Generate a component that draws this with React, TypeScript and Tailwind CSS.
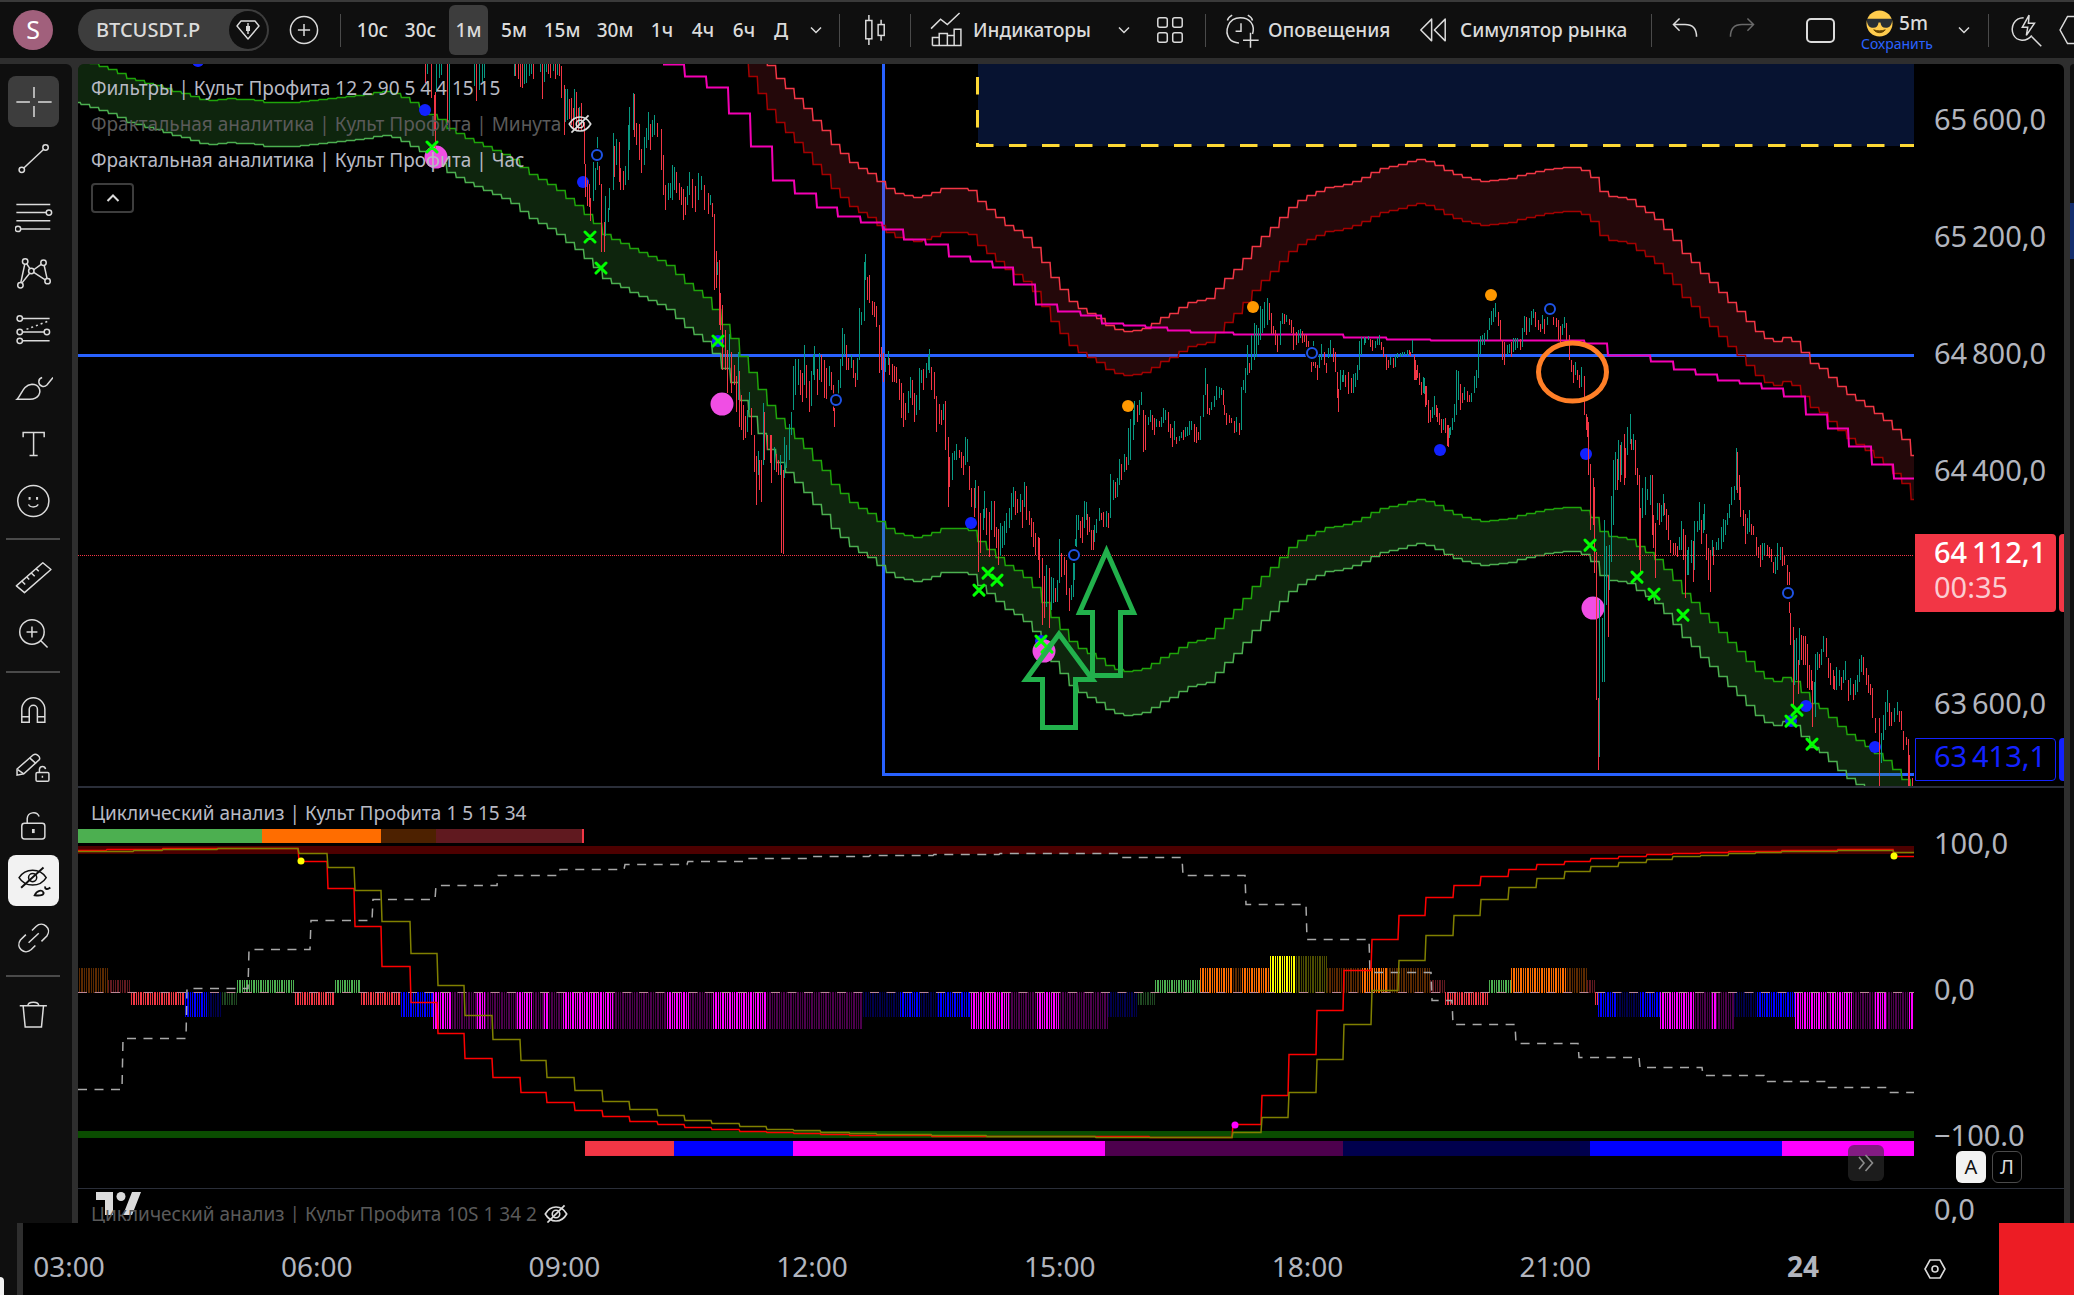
import type { ReactNode } from "react";
import { clsx } from "clsx";

type Point = [number, number];

const parse = (data: string) =>
  data
    .trim()
    .split(/\s*,\s*/)
    .map((item) => item.split(/\s+/).map(Number));

/* ---------- price pane data ---------- */

// upper edge of the green channel, the other three edges are shifted copies
const CHANNEL = parse(`
78 58, 99 64, 116 70, 134 79, 152 83, 172 89, 192 95, 209 101, 229 98, 249 99, 272 102, 298 102, 318 100, 338 97,
365 95, 385 90, 400 94, 414 101, 423 106, 432 113, 441 118, 452 128, 461 133, 479 142, 496 149, 514 158, 532 173,
550 182, 561 189, 570 198, 579 204, 589 214, 598 223, 607 234, 616 239, 629 245, 643 252, 657 257, 671 265, 680 273,
689 283, 698 289, 707 296, 716 307, 725 322, 735 337, 744 355, 753 371, 763 389, 771 404, 780 417, 790 428, 799 438,
808 447, 817 459, 826 469, 835 483, 845 493, 854 502, 863 508, 872 513, 881 520, 891 528, 900 533, 918 537, 932 534,
946 528, 968 528, 973 530, 981 540, 991 548, 1001 557, 1010 565, 1020 570, 1028 577, 1037 586, 1046 601, 1055 616,
1064 628, 1073 640, 1082 647, 1093 653, 1102 658, 1111 665, 1120 669, 1129 671, 1146 669, 1155 664, 1165 657,
1174 653, 1184 647, 1193 642, 1211 638, 1220 628, 1229 618, 1239 609, 1247 599, 1257 586, 1266 576, 1276 566,
1285 556, 1294 547, 1304 539, 1313 534, 1330 527, 1350 524, 1368 516, 1382 509, 1400 505, 1413 501, 1422 499,
1432 501, 1443 507, 1452 511, 1469 518, 1486 521, 1512 518, 1529 513, 1550 509, 1572 506, 1585 509, 1596 517,
1604 531, 1614 536, 1634 539, 1642 547, 1651 552, 1660 559, 1669 569, 1678 580, 1687 593, 1697 603, 1705 613,
1715 623, 1725 634, 1734 643, 1743 652, 1752 662, 1761 672, 1770 678, 1778 681, 1788 677, 1798 682, 1806 692,
1816 704, 1826 709, 1834 718, 1843 726, 1852 734, 1862 741, 1870 746, 1881 754, 1890 762, 1899 771, 1908 780, 1914 795
`);

const TREND = parse(`
663 64, 685 76, 707 87, 729 113, 751 146, 773 180, 795 193, 817 207, 838 216, 861 222, 883 229, 904 239, 926 244,
949 256, 971 261, 993 267, 1014 284, 1036 304, 1058 311, 1081 315, 1102 323, 1124 325, 1146 327, 1168 330, 1191 332,
1234 334, 1321 334, 1344 337, 1387 339, 1431 340, 1585 343, 1608 355, 1651 361, 1674 369, 1696 374, 1718 380,
1740 383, 1762 388, 1784 396, 1806 414, 1828 428, 1849 446, 1872 464, 1894 478
`);

// bars as "x high low"; x is local to the group
const BAR_GROUPS = [
  {
    from: 400,
    scale: 2.8,
    bars: `70 64 83, 76 64 74, 88 64 98, 94 95 131, 97 92 148, 102 64 92, 108 64 78, 115 64 75, 132 64 125, 138 64 120,
207 64 86, 212 64 101, 222 64 90, 230 64 82, 236 64 78, 318 64 76, 323 64 76, 329 64 79, 335 64 87, 341 64 88, 347 64 84,
354 64 83, 360 64 76, 366 64 74, 373 64 79, 391 64 72, 397 64 99, 403 64 82, 409 64 72, 415 64 74, 421 64 78, 427 64 71, 433 64 79,
439 64 75, 445 64 76, 452 66 98, 458 85 135, 462 89 122, 468 89 120, 473 99 119, 478 98 125, 483 108 128, 488 89 120,
492 92 130, 497 108 130, 502 107 125, 508 103 130, 514 122 164, 519 164 197, 523 180 206, 528 184 207, 533 198 221,
539 162 201, 545 168 190, 551 137 170, 557 166 185, 564 184 252, 570 222 252, 575 196 236, 581 208 222, 586 188 210,
595 133 190, 600 146 177, 606 139 165, 612 142 182, 617 168 190, 623 171 190, 631 166 185, 637 125 180, 642 107 150,
651 93 130, 656 94 137, 662 123 145, 668 124 160, 676 149 173, 682 137 165, 688 128 148, 693 112 140, 700 124 150,
706 120 137, 712 115 135, 720 123 137, 730 129 170, 737 155 195, 743 185 210, 749 183 200, 755 183 198, 761 165 200,
768 167 190, 774 172 193, 780 183 200, 786 187 205, 792 189 220, 798 197 215, 804 186 205, 810 172 195, 817 179 208,
827 186 212, 835 173 200, 842 176 190, 852 185 210, 861 193 214, 867 195 205, 873 203 217, 878 214 290, 884 251 288,
887 262 275, 892 260 325, 897 293 330, 902 305 370, 910 330 370, 915 350 393, 922 334 370, 928 352 393, 934 365 385,
940 376 412, 946 352 400, 948 371 427, 954 395 430, 960 405 440, 966 416 438, 971 410 432, 976 392 410, 984 408 435,
990 435 472, 996 456 505, 1001 451 475, 1006 460 490, 1010 460 502, 1015 403 465, 1020 412 460, 1028 435 450,
1035 435 463, 1040 435 483, 1046 447 470, 1052 454 472, 1058 460 475, 1063 455 475, 1068 465 553, 1071 470 554,
1076 437 478, 1082 445 468, 1088 424 460, 1095 412 435, 1101 366 410, 1107 359 395, 1113 359 385, 1119 370 395,
1126 373 402, 1132 345 385, 1138 365 398, 1144 381 412, 1150 371 406, 1155 355 375, 1160 346 380, 1168 369 395,
1174 353 380, 1180 355 382, 1186 360 398, 1192 368 399, 1200 366 386, 1206 372 390, 1211 385 411, 1216 408 427,
1225 380 395, 1231 359 388, 1237 328 366, 1242 334 355, 1248 345 370, 1254 358 370, 1262 355 368, 1268 360 378,
1273 373 387, 1280 358 380, 1286 308 360, 1292 312 325, 1298 262 321, 1303 254 280, 1308 277 300, 1314 275 303,
1322 301 315, 1328 302 317, 1334 306 327, 1340 325 373, 1348 347 370, 1353 353 382, 1359 358 372, 1365 351 365,
1370 358 375, 1378 364 382, 1384 366 382, 1390 367 383, 1396 379 400`,
  },
  {
    from: 900,
    scale: 2.8,
    bars: `2 383 418, 9 393 427, 15 403 420, 21 391 413, 27 377 398, 33 380 405, 40 393 422, 46 395 415, 52 368 410,
58 370 383, 65 369 390, 72 363 378, 77 355 370, 82 349 373, 88 367 390, 95 372 399, 102 396 432, 108 404 424,
114 410 425, 119 404 420, 127 401 450, 133 437 507, 138 457 487, 145 453 480, 152 451 460, 158 444 460, 164 450 458,
170 452 468, 175 456 475, 181 437 465, 187 439 462, 194 466 490, 200 488 507, 206 488 517, 211 480 508, 218 486 572,
225 513 553, 231 509 530, 236 491 518, 242 508 535, 248 512 557, 256 501 530, 262 501 537, 268 527 548, 273 529 565,
279 523 556, 285 526 548, 291 521 545, 298 513 533, 304 508 528, 310 493 520, 317 487 507, 322 491 515, 328 499 513,
335 494 512, 342 500 528, 348 482 507, 354 486 520, 360 511 525, 366 518 537, 373 522 547, 379 533 555, 385 537 560,
390 538 578, 397 558 625, 403 576 618, 410 565 607, 416 568 628, 422 577 610, 429 578 603, 435 588 602, 440 580 602,
446 539 583, 452 553 577, 459 557 575, 466 560 595, 472 588 611, 478 585 600, 483 563 597, 488 563 580, 489 539 546,
492 515 547, 498 515 530, 504 521 538, 510 517 543, 514 501 528, 520 502 520, 524 514 535, 529 517 532, 535 530 550,
540 530 550, 544 525 542, 550 519 533, 556 508 521, 563 513 520, 569 512 527, 576 511 527, 583 513 528, 589 474 518,
595 480 500, 601 482 498, 608 478 497, 614 459 485, 620 464 480, 626 454 472, 632 457 470, 638 428 465, 644 419 460,
651 410 440, 656 401 425, 663 405 422, 669 400 415, 675 392 405, 681 410 452, 687 415 450, 693 417 425, 699 410 422,
705 415 430, 712 418 435, 718 419 427, 724 421 427, 730 417 427, 737 408 423, 743 410 420, 749 412 432, 755 424 438,
761 428 447, 768 421 440, 774 437 444, 780 436 441, 787 432 438, 793 430 440, 798 427 437, 804 427 436, 810 421 435,
816 421 430, 822 424 442, 828 427 443, 834 432 440, 840 416 440, 848 395 417, 853 368 395, 860 384 414, 866 408 415,
872 402 410, 879 396 407, 886 386 400, 892 387 398, 898 388 395, 903 390 405, 908 405 415, 914 413 425, 921 415 423,
928 418 423, 934 421 433, 940 417 432, 948 423 435, 954 387 430, 960 380 390, 965 368 393, 971 345 375, 977 363 373,
984 335 370, 990 323 360, 996 325 357, 1002 328 345, 1008 306 340, 1014 309 333, 1020 302 328, 1027 298 325,
1032 303 320, 1038 313 334, 1044 326 334, 1050 330 345, 1056 335 352, 1064 321 345, 1069 313 324, 1076 314 324,
1082 315 322, 1088 319 325, 1094 320 333, 1101 327 350, 1108 332 345, 1114 330 343, 1120 329 338, 1126 331 343,
1132 334 342, 1138 335 347, 1143 341 349, 1150 362 372, 1156 341 346, 1156 362 366, 1162 362 368, 1168 365 380,
1174 355 368, 1180 344 360, 1186 352 365, 1192 363 373, 1198 348 358, 1205 340 357, 1211 348 362, 1217 352 372,
1223 372 398, 1225 389 412, 1231 370 390, 1237 375 382, 1241 370 382, 1247 375 387, 1255 372 394, 1262 378 393,
1269 374 393, 1275 373 387, 1280 365 380, 1286 341 370, 1292 337 355, 1298 337 345, 1303 338 343, 1309 336 340,
1315 339 347, 1322 340 351, 1329 341 348, 1335 338 345, 1341 335 345, 1347 342 350, 1353 347 357, 1360 355 370,
1366 360 368, 1372 357 365, 1379 358 368, 1385 355 367, 1392 353 358, 1399 353 357, 1410 352 355, 1420 350 356,
1427 352 356, 1433 340 352, 1440 355 380, 1446 370 380, 1452 374 385, 1459 382 395, 1465 377 393, 1471 386 407,
1478 400 422, 1484 410 422, 1490 408 418, 1496 397 412, 1502 405 417, 1508 413 423, 1514 419 433, 1520 421 429,
1526 418 433, 1533 425 447, 1539 427 435, 1545 422 430, 1551 404 422, 1556 370 410`,
  },
  {
    from: 1400,
    scale: 2.326,
    bars: `4 352 356, 10 352 355, 16 350 355, 22 350 355, 27 341 353, 35 360 380, 40 365 378, 45 373 385, 50 382 395, 55 378 394, 60 386 405,
65 400 423, 70 411 420, 75 407 418, 80 396 415, 85 408 422, 90 413 425, 95 420 433, 99 419 430, 105 420 430, 110 425 446,
115 428 438, 120 418 428, 125 405 417, 130 385 415, 134 371 400, 140 384 410, 145 393 403, 150 387 400, 155 391 402,
160 395 402, 166 393 402, 171 376 393, 176 370 388, 181 340 378, 186 336 354, 191 335 345, 196 333 345, 202 330 340,
207 318 330, 212 311 325, 217 308 322, 222 303 317, 227 312 326, 232 320 340, 238 340 360, 243 342 365, 249 345 355,
254 344 353, 258 342 357, 263 338 352, 268 338 350, 273 338 348, 279 339 350, 284 328 347, 289 316 332, 294 317 335,
299 318 332, 305 311 325, 310 309 318, 315 312 327, 320 320 330, 325 324 332, 330 315 329, 336 319 334, 341 317 325,
357 317 325, 362 318 327, 367 320 341, 371 326 344, 376 324 335, 381 317 328, 386 323 340, 392 335 360, 397 360 372,
402 365 383, 406 362 375, 411 370 380, 416 375 388, 421 367 387, 427 376 415, 432 414 430, 434 417 437, 438 422 475,
443 464 530, 448 478 525, 452 487 573, 457 552 700, 460 698 770, 464 600 757, 469 618 682, 474 520 682, 478 546 605,
483 575 637, 485 545 590, 490 496 562, 495 460 525, 499 452 490, 504 459 490, 508 440 480, 511 445 482, 514 442 475, 520 434 485,
524 448 478, 529 427 455, 534 414 444, 538 439 450, 542 434 450, 546 440 475, 551 468 485, 555 475 560, 559 508 575,
564 488 518, 570 477 515, 575 489 500, 581 475 505, 585 475 535, 589 515 548, 593 523 578, 598 503 520, 602 503 525,
607 505 522, 611 494 516, 615 503 515, 619 509 530, 624 515 540, 629 540 553, 634 543 555, 639 543 555, 644 546 557,
649 537 550, 653 521 550, 658 529 560, 662 535 598, 667 550 575, 671 547 575, 676 540 563, 681 541 582, 685 521 570,
690 521 532, 695 502 530, 699 520 544, 704 514 533, 708 504 530, 712 534 560, 716 548 580, 720 550 592, 725 540 556,
729 547 565, 734 542 550, 740 538 550, 746 527 549, 751 519 542, 756 520 535, 761 513 525, 766 504 518, 771 487 505,
776 486 500, 781 448 490, 785 452 493, 789 475 500, 792 487 517, 797 510 526, 802 514 544, 806 518 534, 811 510 532,
816 524 535, 821 526 535, 827 537 555, 832 547 558, 837 545 567, 842 543 560, 847 543 555, 853 545 556, 858 547 558,
863 549 562, 868 562 573, 873 557 574, 878 543 570, 883 547 560, 888 547 566, 894 556 565, 899 565 585, 904 572 585,
904 602 613, 908 613 645, 913 627 705, 917 640 685, 921 638 680, 925 660 694, 929 628 665, 933 635 660, 938 636 665,
942 636 665, 947 644 688, 951 665 690, 955 670 690, 959 681 727, 963 682 703, 966 654 717, 970 652 670, 975 654 668,
980 649 665, 985 636 652, 990 638 657, 996 658 678, 1001 663 685, 1006 670 689, 1010 676 690, 1015 667 690,
1020 670 686, 1025 677 690, 1030 670 683, 1036 661 680, 1041 680 701, 1047 678 695, 1053 684 700, 1058 680 695,
1063 675 692, 1068 659 682, 1073 655 672, 1078 657 675, 1083 668 685, 1088 675 693, 1093 684 695, 1098 688 718,
1104 718 733, 1113 718 787, 1118 733 763, 1123 715 740, 1128 702 730, 1133 690 712, 1138 703 726, 1143 712 726,
1149 708 722, 1155 702 715, 1160 711 722, 1166 711 730, 1171 731 750, 1176 737 745, 1181 739 788, 1185 755 788,
1191 778 788`,
  },
];

const BARS = BAR_GROUPS.flatMap((group) =>
  parse(group.bars).map(([x, high, low]) => ({
    x: Math.round(group.from + x / group.scale),
    high,
    low,
  })),
).map((bar, i, all) => {
  const prev = all[Math.max(0, i - 1)];
  return { ...bar, up: bar.high + bar.low < prev.high + prev.low };
});

const BLUE_DOTS: Point[] = [
  [198, 61], [425, 110], [583, 182], [718, 341], [971, 523], [1041, 641], [1440, 450], [1586, 454], [1806, 706],
  [1791, 721], [1875, 747],
];
const RINGS: Point[] = [[597, 155], [836, 400], [1074, 555], [1312, 353], [1550, 309], [1788, 593]];
const ORANGE_DOTS: Point[] = [[1128, 406], [1253, 307], [1491, 295]];
const PINK_DOTS: Point[] = [[436, 157], [722, 404], [1044, 651], [1593, 608]];
const CROSSES: Point[] = [
  [432, 147], [590, 237], [601, 268], [718, 341], [979, 590], [988, 573], [997, 580], [1041, 641], [1047, 647],
  [1590, 545], [1637, 577], [1654, 594], [1683, 615], [1797, 710], [1791, 721], [1812, 744],
];

/* ---------- oscillator pane data ---------- */

const FAST = parse(`
78 850, 107 849, 163 848, 299 861, 328 888, 355 926, 382 966, 411 1002, 438 1033, 465 1058, 493 1077, 521 1092,
547 1102, 575 1110, 603 1116, 630 1121, 658 1124, 685 1127, 712 1129, 740 1131, 767 1132, 794 1133, 821 1134,
850 1135, 904 1135, 932 1136, 1150 1137, 1233 1124, 1262 1095, 1289 1054, 1317 1010, 1344 970, 1372 939, 1399 915,
1426 897, 1454 885, 1481 876, 1509 869, 1537 864, 1565 861, 1591 858, 1619 856, 1647 854, 1673 853, 1701 852,
1729 851, 1782 850, 1838 849, 1894 856
`);
const SLOW = parse(`
78 851, 134 850, 163 849, 218 848, 299 853, 328 867, 355 890, 382 921, 411 953, 438 985, 465 1015, 493 1039,
521 1060, 547 1077, 575 1090, 603 1101, 630 1109, 658 1115, 685 1120, 712 1123, 740 1126, 767 1129, 794 1130,
821 1132, 850 1133, 877 1134, 932 1135, 987 1136, 1096 1137, 1233 1132, 1262 1117, 1289 1092, 1317 1059, 1344 1024,
1372 990, 1399 960, 1426 935, 1454 915, 1481 899, 1509 887, 1537 878, 1565 871, 1591 866, 1619 862, 1647 859,
1673 856, 1701 855, 1729 853, 1756 852, 1782 851, 1838 850, 1894 852
`);
const HIGHER = parse(`
78 1089, 123 1038, 187 988, 249 949, 311 920, 373 899, 436 885, 498 875, 560 869, 625 864, 688 861, 747 858,
809 856, 870 855, 934 854, 1000 853, 1120 857, 1183 875, 1246 904, 1307 939, 1370 972, 1432 1000, 1453 1024,
1516 1043, 1579 1057, 1640 1067, 1703 1075, 1765 1081, 1827 1087, 1889 1092
`);

const LEVELS: Record<string, [number, string]> = {
  brown: [-24, "#5c2a00"],
  darkRed: [-12, "#60191f"],
  red: [12, "#f23645"],
  blue: [24, "#0000ff"],
  navy: [24, "#00004d"],
  darkGreen: [12, "#1e4620"],
  green: [-12, "#4caf50"],
  magenta: [36, "#ff00ff"],
  purple: [36, "#4d004d"],
  orange: [-24, "#ff6d00"],
  yellow: [-36, "#ffff00"],
  olive: [-36, "#4d4d00"],
};

// every run lasts until the x given with it
const RUNS: [number, string][] = [
  [108, "brown"], [131, "darkRed"], [185, "red"], [208, "blue"], [222, "navy"], [237, "darkGreen"], [295, "green"],
  [335, "red"], [361, "green"], [401, "red"], [433, "blue"], [452, "magenta"], [477, "purple"], [485, "magenta"],
  [517, "purple"], [533, "magenta"], [544, "purple"], [549, "magenta"], [563, "purple"], [613, "magenta"],
  [667, "purple"], [690, "magenta"], [713, "purple"], [767, "magenta"], [863, "purple"], [900, "navy"],
  [921, "blue"], [938, "navy"], [971, "blue"], [1009, "magenta"], [1037, "purple"], [1060, "magenta"],
  [1108, "purple"], [1138, "navy"], [1155, "darkGreen"], [1200, "green"], [1233, "orange"], [1242, "brown"],
  [1270, "orange"], [1296, "yellow"], [1327, "olive"], [1362, "brown"], [1387, "orange"], [1430, "brown"],
  [1445, "darkRed"], [1489, "red"], [1511, "green"], [1567, "orange"], [1587, "brown"], [1595, "darkRed"],
  [1598, "red"], [1617, "blue"], [1640, "navy"], [1660, "blue"], [1695, "magenta"], [1712, "purple"],
  [1716, "magenta"], [1734, "purple"], [1757, "navy"], [1795, "blue"], [1826, "magenta"], [1830, "purple"],
  [1853, "magenta"], [1875, "purple"], [1886, "magenta"], [1909, "purple"], [1914, "magenta"],
];

const TOP_STRIP: [number, number, string][] = [
  [78, 262, "#4caf50"], [262, 381, "#ff6d00"], [381, 436, "#4d2100"], [436, 582, "#60191f"], [582, 584, "#f23645"],
];
const BOTTOM_STRIP: [number, number, string][] = [
  [585, 674, "#f23645"], [674, 793, "#0000ff"], [793, 1105, "#ff00ff"], [1105, 1343, "#4d004d"],
  [1343, 1590, "#00004d"], [1590, 1782, "#0000ff"], [1782, 1914, "#ff00ff"],
];

/* ---------- path helpers ---------- */

const RIGHT = 1914;

function valueAt(points: number[][], x: number) {
  const i = points.findIndex((p) => p[0] >= x);
  if (i < 0) return points[points.length - 1][1];
  if (i === 0) return points[0][1];
  const [x1, y1] = points[i - 1];
  const [x2, y2] = points[i];
  return y1 + ((y2 - y1) * (x - x1)) / (x2 - x1);
}

function stepPoints(points: number[][]): Point[] {
  return points.flatMap(([x, y], i): Point[] => {
    const next = points[i + 1]?.[0] ?? RIGHT + 1;
    return [[x, y], [next - 1, y]];
  });
}

const toPath = (points: Point[]) => "M" + points.map((p) => p.join(" ")).join("L");

const STEP = 9.15;
const channelSteps = Array.from({ length: 202 }, (_, i) => {
  const x = 72 + i * STEP;
  return [x, Math.round(valueAt(CHANNEL, x + STEP / 2))];
}).filter(([x]) => x < RIGHT);

const edge = (shift: number): Point[] =>
  stepPoints(channelSteps).map(([x, y]): Point => [x, y + shift + 0.5]);

function Channel({ shift, fill, upper, lower }: { shift: number; fill: string; upper: string; lower: string }) {
  const top = edge(shift);
  const bottom = edge(shift + 44);
  return (
    <g fill="none">
      <path d={toPath([...top, ...[...bottom].reverse()]) + "Z"} fill={fill} />
      <path d={toPath(top)} stroke={upper} strokeWidth="1.5" />
      <path d={toPath(bottom)} stroke={lower} strokeWidth="1.5" />
    </g>
  );
}

/* ---------- charts ---------- */

function PriceChart() {
  const bars = (up: boolean) =>
    BARS.filter((b) => b.up === up)
      .map((b) => `M${b.x + 0.5} ${b.high}V${b.low}`)
      .join("");

  return (
    <svg viewBox="78 64 1836 722" preserveAspectRatio="none" className="absolute inset-0 h-full w-full">
      <rect x="978" y="64" width="936" height="82" fill="#071331" />
      <g stroke="#fdd835" strokeWidth="3" strokeDasharray="17.5 15.5">
        <path d="M977.5 77V146" />
        <path d="M976 145.5H1914" />
      </g>
      <path d="M78 355.5H1914M883.5 64V774.5H1914" fill="none" stroke="#2962ff" strokeWidth="3" />
      <Channel shift={-340} fill="rgba(242,54,69,0.15)" upper="#f23645" lower="#a50000" />
      <Channel shift={0} fill="rgba(60,155,55,0.24)" upper="#1fa50a" lower="#4caf50" />
      <path d={toPath(stepPoints(TREND))} transform="translate(0 0.5)" fill="none" stroke="#f500b4" strokeWidth="2" />
      <path d="M78 555.5H1914" stroke="#f23645" strokeDasharray="1 1" />

      {BLUE_DOTS.map(([x, y]) => (
        <circle key={x} cx={x} cy={y} r="6" fill="#1222ff" />
      ))}
      {PINK_DOTS.map(([x, y]) => (
        <circle key={x} cx={x} cy={y} r="11.5" fill="#f04ee4" />
      ))}
      <path d={bars(false)} stroke="#f23645" />
      <path d={bars(true)} stroke="#089981" />
      {ORANGE_DOTS.map(([x, y]) => (
        <circle key={x} cx={x} cy={y} r="6" fill="#ff9800" />
      ))}
      {RINGS.map(([x, y]) => (
        <g key={x}>
          <circle cx={x} cy={y} r="7" fill="#000" />
          <circle cx={x} cy={y} r="5" fill="#000" stroke="#1e53e5" strokeWidth="2" />
        </g>
      ))}
      <path
        d={CROSSES.map(([x, y]) => `M${x - 5} ${y - 5}l10 10m0 -10l-10 10`).join("")}
        stroke="#00ff00"
        strokeWidth="3"
        strokeLinecap="round"
      />

      <g fill="none" stroke="#22b14c" strokeWidth="5">
        <path d="M1106.5 551L1133.5 612.5H1120.5V675.5H1092.500V612.5H1079.5Z" />
        <path d="M1059 634L1092.500 679.5H1075.5V727.5H1042.5V679.5H1026Z" />
      </g>
      <ellipse cx="1572.5" cy="372" rx="34" ry="29" fill="none" stroke="#ff7f27" strokeWidth="5" />
    </svg>
  );
}

function CycleChart() {
  return (
    <svg viewBox="78 788 1836 400" preserveAspectRatio="none" className="absolute inset-0 h-full w-full">
      {TOP_STRIP.map(([from, to, color]) => (
        <rect key={from} x={from} y="829" width={to - from} height="14" fill={color} />
      ))}
      {BOTTOM_STRIP.map(([from, to, color]) => (
        <rect key={from} x={from} y="1141" width={to - from} height="15" fill={color} />
      ))}
      <rect x="78" y="846" width="1836" height="8" fill="#4d0000" />
      <rect x="78" y="1131" width="1836" height="7" fill="#0a4d00" />

      {RUNS.map(([to, name], i) => {
        const from = i === 0 ? 79 : RUNS[i - 1][0];
        const [offset, color] = LEVELS[name];
        return (
          <path
            key={to}
            d={`M${from} ${992.5 + offset / 2}H${to}`}
            stroke={color}
            strokeWidth={Math.abs(offset) + 1}
            strokeDasharray="1 1 2 1 1 1"
          />
        );
      })}
      <path d="M78 992.5H1914" stroke="#c08a9a" strokeDasharray="9 7.5" />

      <g fill="none">
        <path d={toPath(stepPoints(HIGHER))} transform="translate(0 0.5)" stroke="#a8a8a8" strokeWidth="1.5" strokeDasharray="9 7.5" />
        <path d={toPath(stepPoints(FAST))} transform="translate(0 0.5)" stroke="#ff0000" strokeWidth="1.5" />
        <path d={toPath(stepPoints(SLOW))} transform="translate(0 0.5)" stroke="#808000" strokeWidth="1.5" />
      </g>
      <circle cx="301" cy="861" r="3.5" fill="#ffff00" />
      <circle cx="1894" cy="856" r="3.5" fill="#ffff00" />
      <circle cx="1235" cy="1125" r="3.5" fill="#ff00ff" />
    </svg>
  );
}

/* ---------- icons ---------- */

function Icon({ children, className }: { children: ReactNode; className?: string }) {
  return (
    <svg
      viewBox="0 0 28 28"
      fill="none"
      stroke="currentColor"
      strokeWidth="1.1"
      className={clsx("shrink-0", className ?? "h-[38px] w-[38px]")}
      aria-hidden="true"
    >
      {children}
    </svg>
  );
}

const EyeOff = (
  <>
    <path d="M4 14c2.500-4.500 6-6.500 10-6.500s7.500 2 10 6.500c-2.500 4.500-6 6.500-10 6.500S6.500 18.500 4 14Z" strokeWidth="1.500" />
    <circle cx="14" cy="14" r="3.500" strokeWidth="1.500" />
    <path d="M6 22L22 6" strokeWidth="1.600" />
  </>
);

const ChevronDown = (
  <svg viewBox="0 0 12 8" className="h-2 w-3 shrink-0" fill="none" stroke="currentColor" strokeWidth="1.5" aria-hidden="true">
    <path d="M1 1.500l5 5 5-5" />
  </svg>
);

type Tool = { label: string; icon: ReactNode; tone?: "selected" | "light" } | null;

const TOOLS: Tool[] = [
  {
    label: "Перекрестие",
    tone: "selected",
    icon: <path d="M14 3v8M14 17v8M1 14h10M17 14h10" />,
  },
  {
    label: "Линия тренда",
    icon: (
      <>
        <circle cx="22.500" cy="5.500" r="2" />
        <circle cx="5" cy="22" r="2" />
        <path d="M6.500 20.600L21 7" />
      </>
    ),
  },
  {
    label: "Коррекция Фибоначчи",
    icon: (
      <>
        <path d="M1 5.500h25M1 11.500h22M1 17.500h25M4 23.500h22" />
        <circle cx="25" cy="11.500" r="2" />
        <circle cx="2.200" cy="23.500" r="2" />
      </>
    ),
  },
  {
    label: "Паттерны",
    icon: (
      <>
        <circle cx="7.500" cy="5.500" r="2" />
        <circle cx="21" cy="6.500" r="2" />
        <circle cx="12" cy="12.500" r="2" />
        <circle cx="24" cy="20" r="2" />
        <circle cx="4" cy="23" r="2" />
        <path d="M7.200 7.500L4.300 21M8.600 7.200l2.400 3.600M13.800 11.600l5.500-4M21.500 8.500L23.600 18M13.800 13.500l8.500 5.500M10.800 14.200L5.200 21.300" />
      </>
    ),
  },
  {
    label: "Прогноз",
    icon: (
      <>
        <circle cx="3.500" cy="5.500" r="2" />
        <circle cx="3.500" cy="15.500" r="2" />
        <circle cx="23.500" cy="15.500" r="2" />
        <circle cx="3.500" cy="22" r="2" />
        <path d="M5.500 5.500h20M5.500 15.500h16M5.500 22h20" />
        <path d="M8.500 13.500l16-6" strokeDasharray="1.500 2.200" />
      </>
    ),
  },
  {
    label: "Кисть",
    icon: (
      <>
        <path d="M1.500 23C5 20 5.500 12.500 12.500 12c5 0 7 4.500 5 8-1.500 2.500-4 3-6.500 3Z" />
        <path d="M20 7c-3.500 1-3 5.500 0 6.500 1.500.500 2.500 0 3.500-1L28 7" />
      </>
    ),
  },
  {
    label: "Текст",
    icon: <path d="M6 9V5.500h15.500V9M13.700 5.500v17M10.700 22.500h6" />,
  },
  {
    label: "Эмодзи",
    icon: (
      <>
        <circle cx="13.500" cy="14" r="11.500" />
        <path d="M10 16.500c.8 2.500 6.200 2.500 7 0" />
        <path d="M10 12h1.500M15.500 12h1.500" strokeWidth="2" />
      </>
    ),
  },
  null,
  {
    label: "Измерение",
    icon: (
      <>
        <path d="M1 20.500L20.500 3.500l6 5L7 25.500Z" strokeLinejoin="round" />
        <path d="M5 17l2.500 2.500M8.700 14l1.800 1.800M12 11l2.500 2.500M15.700 8l1.800 1.800" />
      </>
    ),
  },
  {
    label: "Увеличить",
    icon: (
      <>
        <circle cx="12.500" cy="12.500" r="9" />
        <path d="M19 19l5 5M8.500 12.500h8M12.500 8.500v8" />
      </>
    ),
  },
  null,
  {
    label: "Магнит",
    icon: (
      <>
        <path d="M5 23V13.500a8.500 8.500 0 0 1 17 0V23h-5.500v-9.500a3 3 0 0 0-6 0V23Z" />
        <path d="M5 19h5.500M16.500 19h5.500" />
      </>
    ),
  },
  {
    label: "Режим рисования",
    icon: (
      <>
        <path d="M1.500 20v-4.500L13.500 5c2-1.200 5.500 1 4.500 3.500L6.500 19Z" />
        <path d="M11 7.500l4.500 4M2 16l4.500 3" />
        <rect x="15.500" y="18" width="9.500" height="6.500" rx="1" />
        <path d="M18 18v-2.500a2.300 2.300 0 0 1 4.500 0M20.200 20.500v1.500" />
      </>
    ),
  },
  {
    label: "Заблокировать объекты",
    icon: (
      <>
        <rect x="5" y="13.500" width="17" height="11.500" rx="2" />
        <path d="M9 13.500V10a4.600 4.600 0 0 1 8.800-1.500" />
        <path d="M13.500 17.700v3" strokeWidth="2" />
      </>
    ),
  },
  {
    label: "Скрыть объекты",
    tone: "light",
    icon: (
      <>
        <path d="M3 11.500C5.500 7.500 9 6 13 6s7.500 1.500 10 5.500C20.500 15.500 17 17 13 17S5.500 15.500 3 11.500Z" />
        <circle cx="13" cy="11.500" r="3" />
        <path d="M4.500 19L21 4" strokeWidth="1.400" />
        <path d="M14.500 24.500c1.500-3.500 5.500-4.500 6.500-2 .5 2-2.500 2.500-6.500 2Z" strokeWidth="1.400" />
        <path d="M22.500 18c-1 1.500 1 3 3.500.8" strokeWidth="1.400" />
      </>
    ),
  },
  {
    label: "Закрепить",
    icon: (
      <path d="M12.500 8.500l3-3c5-4.500 12 1.500 8 7l-4 4M15 19.500l-3 3c-5 4.500-12-1.500-8-7l4-4M10 17.500l7.500-7" />
    ),
  },
  null,
  {
    label: "Удалить",
    icon: <path d="M3.500 8h20M9.500 8c0-3.500 8-3.500 8 0M6 8l1.500 15.500h12L21 8" />,
  },
];

/* ---------- layout ---------- */

const Divider = () => <span className="h-[33px] w-px shrink-0 bg-[#4a4a4a]" />;

const INTERVALS = [
  { label: "10с", width: "w-[39px]" },
  { label: "30с", width: "w-[39px]" },
  { label: "1м", width: "w-[39px]" },
  { label: "5м", width: "w-[34px]" },
  { label: "15м", width: "w-[44px]" },
  { label: "30м", width: "w-[44px]" },
  { label: "1ч", width: "w-[32px]" },
  { label: "4ч", width: "w-[32px]" },
  { label: "6ч", width: "w-[32px]" },
  { label: "Д", width: "w-[24px]" },
];

function TopBar() {
  return (
    <header className="flex h-[58px] shrink-0 items-center overflow-hidden border-t-2 border-[#3a3a3a] bg-[#0f0f0f] pl-[13px] text-[19px] whitespace-nowrap text-[#dbdbdb]">
      <button className="flex h-10 w-10 shrink-0 items-center justify-center rounded-full bg-[#a1607c] text-[25px] text-white">
        S
      </button>
      <div className="ml-[25px] flex h-[42px] w-[191px] shrink-0 items-center justify-between rounded-full bg-[#3d3d3d] pr-0.5 pl-[18px] text-xl font-medium">
        <button>BTCUSDT.P</button>
        <button className="flex h-[38px] w-[38px] items-center justify-center rounded-full bg-[#0f0f0f]" aria-label="Тариф">
          <svg viewBox="0 0 24 20" className="h-5 w-6" fill="none" stroke="currentColor" strokeWidth="1.4">
            <path d="M5 1h14l4 5-11 13L1 6Z" strokeLinejoin="round" />
            <path d="M12 3v11" />
            <path d="M12 6v5" strokeWidth="4" />
          </svg>
        </button>
      </div>
      <button className="ml-[16px] shrink-0" aria-label="Добавить символ">
        <Icon>
          <circle cx="14" cy="14" r="10" />
          <path d="M14 9.500v9M9.500 14h9" />
        </Icon>
      </button>
      <span className="w-[17px] shrink-0" />
      <Divider />
      <nav className="ml-[12px] flex shrink-0 items-center gap-[9px] font-medium">
        {INTERVALS.map(({ label, width }) => (
          <button
            key={label}
            className={clsx("h-[50px] shrink-0 rounded-md", width, label === "1м" && "bg-[#3d3d3d]")}
          >
            {label}
          </button>
        ))}
        <button className="ml-2 shrink-0" aria-label="Все интервалы">{ChevronDown}</button>
      </nav>
      <span className="w-[17px] shrink-0" />
      <Divider />
      <button className="mx-[16px] shrink-0" aria-label="Тип графика">
        <Icon>
          <rect x="7.200" y="7" width="4.500" height="13.500" />
          <path d="M9.500 3v4M9.500 20.500V25" />
          <rect x="16.300" y="10" width="4.500" height="8" />
          <path d="M18.500 6.500V10M18.500 18v4" />
        </Icon>
      </button>
      <Divider />
      <button className="ml-[16px] flex w-[180px] shrink-0 items-center gap-2 font-medium">
        <Icon>
          <path d="M3 13l7-7 5 4 9-8.500M4 25.500v-6h5v6M9 25.500v-9h6v9M15 25.500V18h5v7.500M20 18v-4.500h5v12H4" />
        </Icon>
        Индикаторы
      </button>
      <button className="ml-[11px] shrink-0" aria-label="Избранные индикаторы">{ChevronDown}</button>
      <button className="ml-[21px] shrink-0" aria-label="Шаблоны">
        <Icon>
          <rect x="5" y="5" width="7" height="7" rx="1.500" />
          <rect x="16" y="5" width="7" height="7" rx="1.500" />
          <rect x="5" y="16" width="7" height="7" rx="1.500" />
          <rect x="16" y="16" width="7" height="7" rx="1.500" />
        </Icon>
      </button>
      <span className="w-[16px] shrink-0" />
      <Divider />
      <button className="ml-[16px] flex w-[176px] shrink-0 items-center gap-2 font-medium">
        <Icon>
          <path d="M22.500 17c2-7-2-12-9-12-9 0-12 10-8 15.500 2 2.500 4 3 7 3M14 9v6h-4M4 7c.5-2 1.500-3 3.500-4M19 3c2 1 3 2 3.500 4M15.500 21.500H27M21 16v11" />
        </Icon>
        Оповещения
      </button>
      <button className="ml-[16px] flex w-[217px] shrink-0 items-center gap-2 font-medium">
        <Icon>
          <path d="M13 6v16L5 14ZM23 6v16l-8-8Z" strokeLinejoin="round" />
        </Icon>
        Симулятор рынка
      </button>
      <span className="w-[20px] shrink-0" />
      <Divider />
      <button className="ml-[14px] shrink-0" aria-label="Отменить">
        <Icon>
          <path d="M10 5.500L5.500 10l4.500 4.500M6 10h8c5 0 8.500 2 8.500 9" />
        </Icon>
      </button>
      <button className="ml-[19px] shrink-0 text-[#6a6a6a]" aria-label="Повторить">
        <Icon>
          <path d="M18 5.500L22.500 10 18 14.500M22 10h-8c-5 0-8.500 2-8.500 9" />
        </Icon>
      </button>
      <button className="ml-[45px] h-[25px] w-[29px] shrink-0 rounded-[5px] border-2 border-[#dbdbdb]" aria-label="Макет" />
      <button className="ml-[24px] flex w-[76px] shrink-0 flex-col items-center leading-none">
        <span className="flex items-center gap-1.5 text-[19px] font-medium">
          <svg viewBox="0 0 28 28" className="h-[27px] w-[27px]" aria-hidden="true">
            <circle cx="14" cy="14" r="13.500" fill="#ffcc4d" />
            <path d="M1 9h26v3c-1 5-3 6.500-6.500 6.500-3.500 0-5-2-5.500-5.500h-2c-.5 3.500-2 5.500-5.500 5.500C4 18.500 2 17 1 12Z" fill="#292f33" />
            <path d="M8 20.500c3 4 9 4 12 0-3 1.500-9 1.500-12 0Z" fill="#664500" stroke="#664500" />
          </svg>
          5m
        </span>
        <span className="text-sm leading-[14px] text-[#2962ff]">Сохранить</span>
      </button>
      <button className="ml-[23px] shrink-0" aria-label="Макеты">{ChevronDown}</button>
      <span className="w-[18px] shrink-0" />
      <Divider />
      <button className="ml-[17px] shrink-0" aria-label="Быстрый поиск">
        <Icon>
          <path d="M13 5C6 5 3 12 5.500 17.500 8 22.500 15 23 19 18M19 19l7 7" />
          <path d="M17 3l-5 9h4l-1 6 6-9h-4.500Z" />
        </Icon>
      </button>
      <button className="ml-[12px] shrink-0" aria-label="Настройки">
        <Icon>
          <path d="M8.500 4h11L25 14l-5.500 10h-11L3 14Z" />
        </Icon>
      </button>
    </header>
  );
}

function ToolBar() {
  return (
    <aside className="flex w-[72px] shrink-0 flex-col gap-1.5 overflow-hidden rounded-tr-md bg-[#0f0f0f] pt-3 pl-2 text-[#dbdbdb]">
      {TOOLS.map((tool, i) =>
        tool ? (
          <button
            key={tool.label}
            aria-label={tool.label}
            className={clsx(
              "flex h-[51px] w-[51px] shrink-0 items-center justify-center rounded-lg",
              tool.tone === "selected" && "bg-[#3d3d3d]",
              tool.tone === "light" && "bg-[#f2f2f2] text-[#0f0f0f]",
            )}
          >
            <Icon>{tool.icon}</Icon>
          </button>
        ) : (
          <div key={i} className="-ml-0.5 flex h-[13px] w-[54px] shrink-0 items-center">
            <span className="h-0.5 w-full bg-[#4a4a4a]" />
          </div>
        ),
      )}
    </aside>
  );
}

function Legend({ children, hidden }: { children: ReactNode; hidden?: boolean }) {
  return (
    <div className={clsx("flex h-9 items-center gap-1 whitespace-nowrap", hidden ? "text-[#5a5a5a]" : "text-[#b8bac4]")}>
      {children}
      {hidden && (
        <button className="text-[#dbdbdb]" aria-label="Показать">
          <Icon className="h-[30px] w-[30px]">{EyeOff}</Icon>
        </button>
      )}
    </div>
  );
}

// thousands are split off with a thin space
const PRICES = ["65\u2009600,0", "65\u2009200,0", "64\u2009800,0", "64\u2009400,0", "", "63\u2009600,0"];

function PricePane() {
  return (
    <section className="flex min-h-0 flex-[724] border-b-2 border-[#2a2e39]">
      <div className="relative min-w-0 flex-1 overflow-hidden">
        <PriceChart />
        <div className="absolute top-1.5 left-[13px] text-[19px]">
          <Legend>Фильтры | Культ Профита 12 2 90 5 4 4 15 15</Legend>
          <Legend hidden>Фрактальная аналитика | Культ Профита | Минута</Legend>
          <Legend>Фрактальная аналитика | Культ Профита | Час</Legend>
          <button
            className="mt-[5px] flex h-[30px] w-[43px] items-center justify-center rounded border-2 border-[#3d3d3d] text-[#dbdbdb]"
            aria-label="Свернуть"
          >
            <svg viewBox="0 0 14 8" className="h-2 w-3.5" fill="none" stroke="currentColor" strokeWidth="2">
              <path d="M1.500 7L7 1.500 12.500 7" />
            </svg>
          </button>
        </div>
      </div>
      <div className="relative w-[150px] shrink-0 pt-[37px] text-[29px] text-[#b2b5be]">
        <div className="flex h-[620px] flex-col justify-between pl-5">
          {PRICES.map((price, i) => (
            <span key={i} className="flex h-9 items-center whitespace-nowrap">
              {price}
            </span>
          ))}
        </div>
        <div className="absolute top-[470px] right-0 left-px flex h-[78px] gap-[3px]">
          <div className="flex flex-1 flex-col justify-center rounded-r bg-[#f23645] pb-2 pl-[19px] leading-[35px] whitespace-nowrap">
            <span className="font-medium text-white">{"64\u2009112,1"}</span>
            <span className="text-[#fbcdd1]">00:35</span>
          </div>
          <span className="w-[5px] rounded-l bg-[#f23645]" />
        </div>
        <div className="absolute top-[674px] right-0 left-px flex h-[43px] gap-[3px]">
          <div className="flex flex-1 items-center rounded-r border border-[#1322ff] bg-black pb-[7px] pl-[18px] whitespace-nowrap text-[#1322ff]">
            {"63\u2009413,1"}
          </div>
          <span className="w-[5px] rounded-l bg-[#1322ff]" />
        </div>
      </div>
    </section>
  );
}

function CyclePane() {
  return (
    <section className="flex min-h-0 flex-[401] border-b border-[#2a2e39]">
      <div className="relative min-w-0 flex-1 overflow-hidden">
        <CycleChart />
        <div className="absolute top-[7px] left-[13px] text-[19px]">
          <Legend>Циклический анализ | Культ Профита 1 5 15 34</Legend>
        </div>
        <button
          className="absolute right-[30px] bottom-[7px] flex h-9 w-9 items-center justify-center rounded-md bg-[#2e2e2e]/60 text-[#8c8c8c]"
          aria-label="К последнему бару"
        >
          <svg viewBox="0 0 16 18" className="h-[18px] w-4" fill="none" stroke="currentColor" strokeWidth="1.6">
            <path d="M1 3l5 6-5 6M7.500 1l7 8-7 8" />
          </svg>
        </button>
      </div>
      <div className="flex w-[150px] shrink-0 flex-col pt-[37px] pl-5 text-[29px] whitespace-nowrap text-[#b2b5be]">
        <span className="flex h-9 items-center">100,0</span>
        <span className="mt-[110px] flex h-9 items-center">0,0</span>
        <span className="mt-[110px] flex h-9 items-center">−100.0</span>
        <div className="-mt-0.5 ml-[22px] flex gap-1.5 text-xl">
          <button className="h-8 w-[30px] rounded-md bg-[#f2f2f2] text-[#0f0f0f]">А</button>
          <button className="h-8 w-[30px] rounded-md border border-[#4a4a4a] text-[#dbdbdb]">Л</button>
        </div>
      </div>
    </section>
  );
}

function SecondsPane() {
  return (
    <section className="flex min-h-0 flex-[34]">
      <div className="relative min-w-0 flex-1 overflow-hidden">
        <svg viewBox="0 0 46 24" className="absolute top-0.5 left-[17px] h-6 w-[46px]" fill="#dbdbdb" aria-hidden="true">
          <path d="M1 1h17v23h-8V9H1ZM37 1h9l-9 23h-9Z" />
          <circle cx="26" cy="5.500" r="4.500" />
        </svg>
        <div className="absolute top-[7px] left-[13px] text-[19px]">
          <Legend hidden>Циклический анализ | Культ Профита 10S 1 34 2</Legend>
        </div>
      </div>
      <div className="w-[150px] shrink-0 pl-5 text-[29px] leading-10 text-[#b2b5be]">0,0</div>
    </section>
  );
}

const HOURS = ["03:00", "06:00", "09:00", "12:00", "15:00", "18:00", "21:00", "24"];

function TimeAxis() {
  return (
    <footer className="flex h-[72px] shrink-0 bg-black">
      <div className="flex w-[17px] shrink-0 items-end overflow-hidden bg-[#0f0f0f]">
        <span className="h-[18px] w-1 rounded-tr bg-[#f2f2f2]" />
      </div>
      <div className="w-1.5 shrink-0 bg-[#2e2e2e]" />
      <div className="flex flex-1 items-center pt-3.5 pl-[8px] text-[28px] text-[#b2b5be]">
        <div className="flex flex-1 justify-between">
          {HOURS.map((hour) => (
            <span key={hour} className={clsx("w-[76px] text-center", hour === "24" && "font-bold")}>
              {hour}
            </span>
          ))}
        </div>
        <button className="mt-1.5 mr-[50px] ml-[80px] text-[#dbdbdb]" aria-label="Настройки шкалы">
          <svg viewBox="0 0 28 28" className="h-7 w-7" fill="none" stroke="currentColor" strokeWidth="1.6">
            <path d="M9 5h10l5 9-5 9H9l-5-9Z" />
            <circle cx="14" cy="14" r="3" />
          </svg>
        </button>
      </div>
      <div className="w-[75px] shrink-0 bg-[#ed1c24]" />
    </footer>
  );
}

export default function App() {
  return (
    <div className="flex h-screen flex-col overflow-hidden bg-[#2e2e2e] font-['Noto_Sans',sans-serif]">
      <TopBar />
      <main className="flex min-h-0 flex-1 gap-1.5 pt-1.5">
        <ToolBar />
        <div className="flex min-w-0 flex-1 flex-col overflow-hidden rounded-t-md bg-black">
          <PricePane />
          <CyclePane />
          <SecondsPane />
        </div>
        <div className="w-1 shrink-0 rounded-tl bg-[#0f0f0f] pt-[139px]">
          <div className="h-14 bg-[#142e6e]" />
        </div>
      </main>
      <TimeAxis />
    </div>
  );
}
